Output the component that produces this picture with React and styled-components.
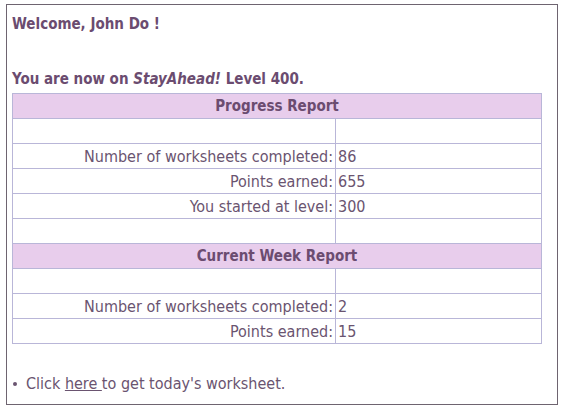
import React from "react";
import styled, { createGlobalStyle } from "styled-components";

const GlobalStyle = createGlobalStyle`
  body {
    margin: 0;
    background: #fff;
    font-family: "DejaVu Sans Condensed", "DejaVu Sans", sans-serif;
    color: #6a5470;
  }
`;

const Frame = styled.div`
  margin: 4px 0 0 6px;
  width: 552px;
  height: 401px;
  border: 1px solid #6e6470;
  padding: 0 5px;
  box-sizing: border-box;
`;

const Greeting = styled.h1`
  margin: 0;
  padding-top: 9px;
  font-size: 15px;
  font-weight: bold;
  color: #6b4c70;
  line-height: 20px;
`;

const LevelLine = styled.p`
  margin: 0;
  padding-top: 35px;
  font-size: 15px;
  font-weight: bold;
  color: #6b4c70;
  line-height: 20px;

  em {
    font-style: italic;
  }
`;

const Report = styled.table`
  margin-top: 4px;
  width: 530px;
  border-collapse: collapse;
  font-size: 16px;
`;

const HeadCell = styled.th`
  background: #e8cdec;
  border: 1px solid #b9b6d8;
  height: 24px;
  padding: 0;
  font-size: 15px;
  font-weight: bold;
  color: #6b4c70;
  text-align: center;
`;

const Label = styled.td`
  border: 1px solid #b9b6d8;
  height: 24px;
  padding: 0 2px 0 0;
  width: 320px;
  text-align: right;
`;

const Value = styled.td`
  border: 1px solid #b9b6d8;
  height: 24px;
  padding: 0 0 0 2px;
  text-align: left;
`;

const Tips = styled.ul`
  margin: 30px 0 0;
  padding: 0;
  list-style: none;
  font-size: 16px;
`;

const Tip = styled.li`
  display: flex;
  align-items: center;
  gap: 9px;
  padding-left: 1px;

  &::before {
    content: "";
    width: 4px;
    height: 4px;
    border-radius: 50%;
    background: #6a5470;
  }

  a {
    color: #6a5470;
  }
`;

const Section = ({ title, rows }) => (
  <>
    <tr>
      <HeadCell colSpan={2}>{title}</HeadCell>
    </tr>
    <tr>
      <Label />
      <Value />
    </tr>
    {rows.map(([label, value]) => (
      <tr key={label}>
        <Label>{label}</Label>
        <Value>{value}</Value>
      </tr>
    ))}
  </>
);

export default function App() {
  return (
    <>
      <GlobalStyle />
      <Frame>
        <Greeting>Welcome, John Do !</Greeting>
        <LevelLine>
          You are now on <em>StayAhead!</em> Level 400.
        </LevelLine>
        <Report>
          <tbody>
            <Section
              title="Progress Report"
              rows={[
                ["Number of worksheets completed:", "86"],
                ["Points earned:", "655"],
                ["You started at level:", "300"],
              ]}
            />
            <tr>
              <Label />
              <Value />
            </tr>
            <Section
              title="Current Week Report"
              rows={[
                ["Number of worksheets completed:", "2"],
                ["Points earned:", "15"],
              ]}
            />
          </tbody>
        </Report>
        <Tips>
          <Tip>
            <span>
              Click <a href="#">here </a>to get today's worksheet.
            </span>
          </Tip>
        </Tips>
      </Frame>
    </>
  );
}
